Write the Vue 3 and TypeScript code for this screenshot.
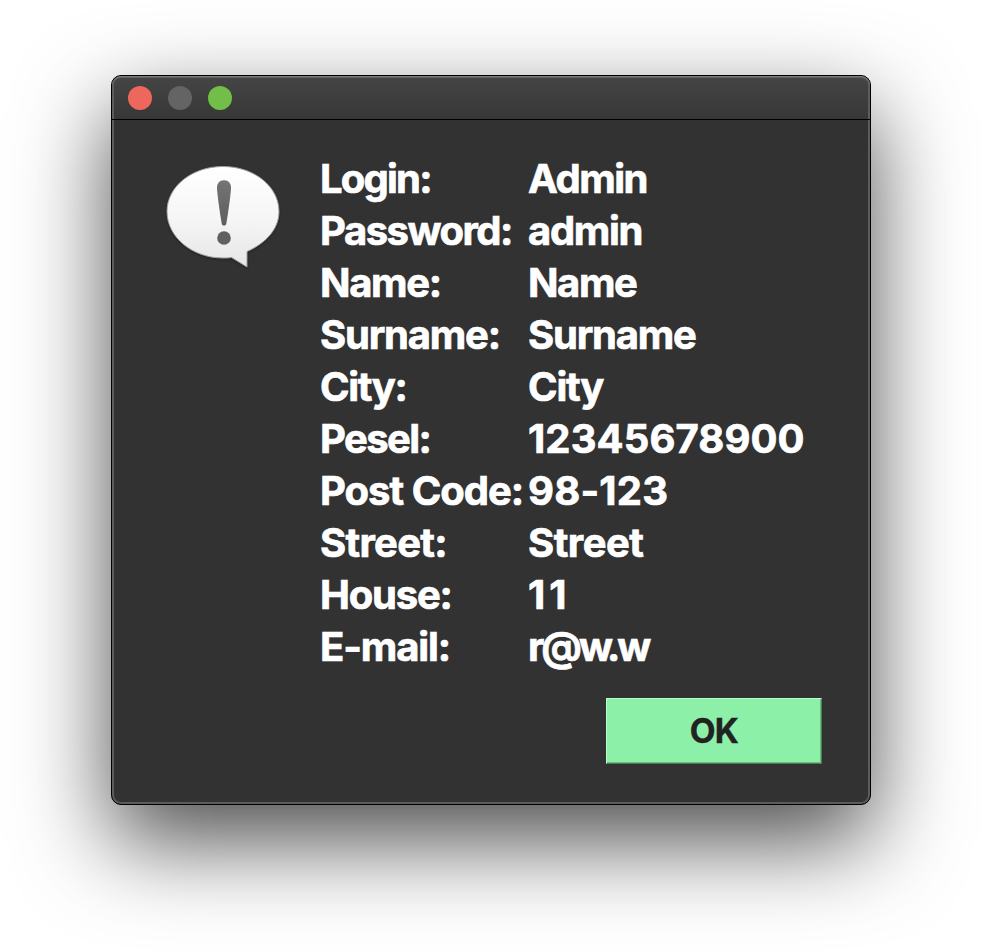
<script setup lang="ts">
interface Cell {
  text: string
  tracking: number
}

interface Field {
  label: Cell
  value: Cell
}

const cell = (text: string, tracking: number): Cell => ({ text, tracking })

const fields: Field[] = [
  { label: cell('Login:', -1.8), value: cell('Admin', -1.5) },
  { label: cell('Password:', -1.5), value: cell('admin', -1.3) },
  { label: cell('Name:', -1.3), value: cell('Name', -1.4) },
  { label: cell('Surname:', -1.2), value: cell('Surname', -1.2) },
  { label: cell('City:', -1.4), value: cell('City', -1.2) },
  { label: cell('Pesel:', -1.6), value: cell('12345678900', 0.1) },
  { label: cell('Post Code:', -1), value: cell('98-123', 0.2) },
  { label: cell('Street:', -0.7), value: cell('Street', -0.5) },
  { label: cell('House:', -1.2), value: cell('11', 4) },
  { label: cell('E-mail:', -1.1), value: cell('r@w.w', -3) },
]
</script>

<template>
  <main class="desktop">
    <section class="window" role="dialog">
      <header class="titlebar">
        <i class="light close"></i>
        <i class="light minimize"></i>
        <i class="light zoom"></i>
      </header>
      <div class="content">
        <svg class="bubble" width="120" height="110" viewBox="0 0 120 110">
          <defs>
            <linearGradient id="bubble-fill" x1="0" y1="0" x2="0" y2="1">
              <stop offset="0" stop-color="#ffffff" />
              <stop offset="0.5" stop-color="#f6f6f6" />
              <stop offset="1" stop-color="#e6e6e6" />
            </linearGradient>
            <linearGradient id="mark-fill" x1="0" y1="0" x2="0" y2="1">
              <stop offset="0" stop-color="#747474" />
              <stop offset="1" stop-color="#5e5e5e" />
            </linearGradient>
          </defs>
          <path
            d="M60 3.5C91 3.5 116 23.5 116 48.5C116 66 103 80 84 88.5V104L68.500 94.500C66 95 63 95 60 95C29 95 4 74 4 48.500C4 23.500 29 3.500 60 3.500Z"
            fill="url(#bubble-fill)" stroke="#a0a0a0" stroke-width="1"
          />
          <path
            d="M61 17.300C65.500 17.300 68.300 20.500 68 25.500C67.600 32 65.500 48 63.200 61C62.800 63 59.200 63 58.800 61C56.500 48 54.400 32 54 25.500C53.700 20.500 56.500 17.300 61 17.300Z"
            fill="url(#mark-fill)"
          />
          <circle cx="61" cy="75" r="6.800" fill="#606060" />
        </svg>
        <dl class="fields">
          <template v-for="field in fields" :key="field.label.text">
            <dt :style="{ letterSpacing: field.label.tracking + 'px' }">{{ field.label.text }}</dt>
            <dd :style="{ letterSpacing: field.value.tracking + 'px' }">{{ field.value.text }}</dd>
          </template>
        </dl>
      </div>
      <footer class="actions">
        <button class="ok" type="button">OK</button>
      </footer>
    </section>
  </main>
</template>

<style>
body {
  margin: 0;
  background: #ffffff;
}
</style>

<style scoped>
.desktop {
  box-sizing: border-box;
  height: 952px;
  padding: 75px 111px 0;
  overflow: hidden;
  background: #ffffff;
  font-family: Inter, 'Liberation Sans', sans-serif;
}

/* The rim is an inset shadow, so the title bar's rule runs across it */
.window {
  box-sizing: border-box;
  width: 760px;
  height: 730px;
  border: 1px solid #000000;
  border-radius: 10px;
  background: #323232;
  overflow: hidden;
  box-shadow:
    inset 0 0 0 2px #5c5c5c,
    0 36px 92px rgba(0, 0, 0, 0.7);
}

.titlebar {
  box-sizing: border-box;
  display: flex;
  gap: 16px;
  height: 44px;
  padding: 10px 16px 0;
  border-bottom: 1px solid #000000;
  border-radius: 9px 9px 0 0;
  background: linear-gradient(#454545, #373737);
  box-shadow:
    inset 0 1px #7a7a7a,
    inset 0 2px #626262,
    inset 2px 0 #5c5c5c,
    inset -2px 0 #5c5c5c;
}

.light {
  width: 24px;
  height: 24px;
  border-radius: 50%;
}

.close {
  background: #ee675c;
}

.minimize {
  background: #646464;
}

.zoom {
  background: #71be48;
}

.content {
  display: flex;
  padding: 33px 0 0 51px;
  gap: 37px;
}

.bubble {
  flex: none;
  margin-top: 10px;
  filter: drop-shadow(0 1px 1px rgba(0, 0, 0, 0.35));
}

.fields {
  display: grid;
  grid-template-columns: 208px auto;
  grid-auto-rows: 52px;
  margin: 0;
  color: #ffffff;
  font-size: 40px;
  font-weight: 700;
  line-height: 52px;
  white-space: nowrap;
  -webkit-text-stroke: 0.7px #ffffff;
}

dt,
dd {
  margin: 0;
}

.actions {
  display: flex;
  justify-content: flex-end;
  padding: 25px 48px 0 0;
}

.ok {
  box-sizing: border-box;
  width: 216px;
  height: 66px;
  padding: 0;
  border: 1px solid;
  border-color: #b8ffcb #47804f #47804f #b8ffcb;
  background: #8df0a8;
  box-shadow: inset -1px -1px #6fb985;
  color: #222222;
  font: 700 33.5px/63px Inter, 'Liberation Sans', sans-serif;
  letter-spacing: -0.7px;
  -webkit-text-stroke: 0.4px #222222;
}
</style>
